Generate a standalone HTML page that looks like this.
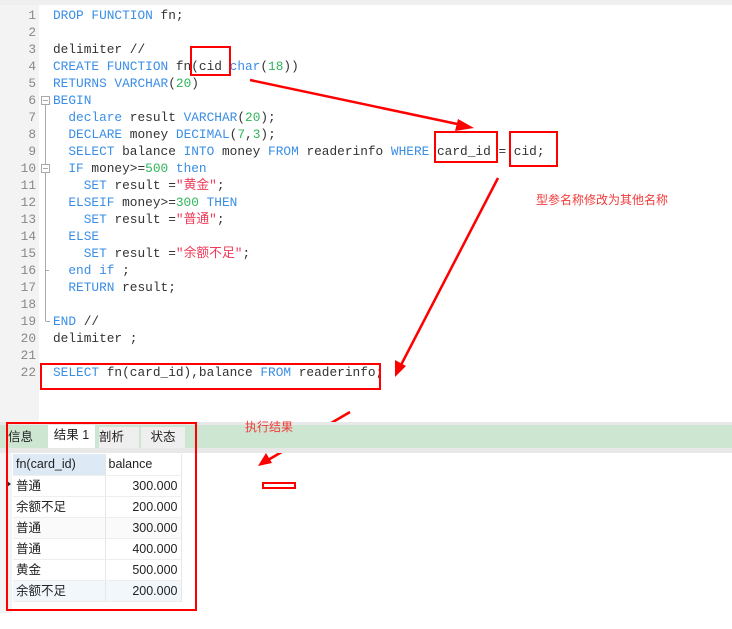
<!DOCTYPE html>
<html><head><meta charset="utf-8"><style>
body{margin:0;width:732px;height:629px;position:relative;background:#fff;overflow:hidden;font-family:"Liberation Sans","Noto Sans CJK SC",sans-serif}
.top{position:absolute;left:0;top:0;width:732px;height:5px;background:#efefef}
.gut{position:absolute;left:0;top:5px;width:39px;height:417px;background:#f3f3f3}
.code{position:absolute;left:0;top:7px;font-family:"Liberation Mono","Noto Sans CJK SC",monospace;font-size:12.8px;color:#333}
.l{position:absolute;height:17px;line-height:17px;white-space:pre}
.n{position:absolute;width:36px;text-align:right;color:#888;left:0}
.t{position:absolute;left:53px}
.k{color:#3a8ee6}.g{color:#2fb55a}.s{color:#f03a5a}
.rb{position:absolute;border:2.5px solid #f00;box-sizing:border-box}
.ann{position:absolute;color:#f03a3a;font-size:12px}
.band{position:absolute;left:0;top:422px;width:732px;height:31px;background:#e8e8e8}
.green{position:absolute;left:0;top:425px;width:732px;height:23px;background:#cde6d2}
.tab{position:absolute;top:427px;height:21px;line-height:21px;font-size:12.5px;color:#222;background:#efefef;text-align:center}
.grid{position:absolute;left:0;top:453px;width:12px;height:160px;background:#f3f3f3}
table{position:absolute;left:13px;top:454px;border-collapse:collapse;font-size:12.5px;color:#222}
td{height:20px;line-height:20px;padding:0 3px;border-right:1px solid #e6e6e6;border-bottom:1px solid #eee;box-sizing:border-box}
tr{height:21px}
td.c1{width:92px}td.c2{width:76px;text-align:right}
tr.h td{background:#dde9f5}tr.h td.c2{background:#fff;text-align:left}
tr.a td{background:#fafafa}tr.b td{background:#f2f7fc}
</style></head><body>
<div class="top"></div><div class="gut"></div>
<svg style="position:absolute;left:0;top:0" width="732" height="629">
<g stroke="#aaa" fill="none" stroke-width="1"><rect x="41.5" y="96.5" width="8" height="8" fill="#fff"/><line x1="43" y1="100.5" x2="48" y2="100.5"/><line x1="45.5" y1="105" x2="45.5" y2="164"/><rect x="41.5" y="164.5" width="8" height="8" fill="#fff"/><line x1="43" y1="168.5" x2="48" y2="168.5"/><line x1="45.5" y1="173" x2="45.5" y2="270"/><line x1="45.5" y1="270.5" x2="49" y2="270.5"/><line x1="45.5" y1="270" x2="45.5" y2="321"/><line x1="45.5" y1="321.5" x2="50" y2="321.5"/></g>
<g stroke="#f00" stroke-width="2.5" fill="#f00">
<line x1="250" y1="80" x2="462" y2="125"/><polygon points="474,128 458,119 455,131" stroke="none"/>
<line x1="498" y1="178" x2="401" y2="365"/><polygon points="395,377 395,360 406,366" stroke="none"/>
<line x1="350" y1="412" x2="268" y2="460"/><polygon points="258,466 266,453 272,463" stroke="none"/>
</g></svg>
<div class="code">
<div class="l" style="top:0"><span class="n">1</span><span class="t"><span class="k">DROP FUNCTION</span> fn;</span></div>
<div class="l" style="top:17px"><span class="n">2</span></div>
<div class="l" style="top:34px"><span class="n">3</span><span class="t">delimiter //</span></div>
<div class="l" style="top:51px"><span class="n">4</span><span class="t"><span class="k">CREATE FUNCTION</span> fn(cid <span class="k">char</span>(<span class="g">18</span>))</span></div>
<div class="l" style="top:68px"><span class="n">5</span><span class="t"><span class="k">RETURNS VARCHAR</span>(<span class="g">20</span>)</span></div>
<div class="l" style="top:85px"><span class="n">6</span><span class="t"><span class="k">BEGIN</span></span></div>
<div class="l" style="top:102px"><span class="n">7</span><span class="t">  <span class="k">declare</span> result <span class="k">VARCHAR</span>(<span class="g">20</span>);</span></div>
<div class="l" style="top:119px"><span class="n">8</span><span class="t">  <span class="k">DECLARE</span> money <span class="k">DECIMAL</span>(<span class="g">7</span>,<span class="g">3</span>);</span></div>
<div class="l" style="top:136px"><span class="n">9</span><span class="t">  <span class="k">SELECT</span> balance <span class="k">INTO</span> money <span class="k">FROM</span> readerinfo <span class="k">WHERE</span> card_id = cid;</span></div>
<div class="l" style="top:153px"><span class="n">10</span><span class="t">  <span class="k">IF</span> money&gt;=<span class="g">500</span> <span class="k">then</span></span></div>
<div class="l" style="top:170px"><span class="n">11</span><span class="t">    <span class="k">SET</span> result =<span class="s">"黄金"</span>;</span></div>
<div class="l" style="top:187px"><span class="n">12</span><span class="t">  <span class="k">ELSEIF</span> money&gt;=<span class="g">300</span> <span class="k">THEN</span></span></div>
<div class="l" style="top:204px"><span class="n">13</span><span class="t">    <span class="k">SET</span> result =<span class="s">"普通"</span>;</span></div>
<div class="l" style="top:221px"><span class="n">14</span><span class="t">  <span class="k">ELSE</span></span></div>
<div class="l" style="top:238px"><span class="n">15</span><span class="t">    <span class="k">SET</span> result =<span class="s">"余额不足"</span>;</span></div>
<div class="l" style="top:255px"><span class="n">16</span><span class="t">  <span class="k">end if</span> ;</span></div>
<div class="l" style="top:272px"><span class="n">17</span><span class="t">  <span class="k">RETURN</span> result;</span></div>
<div class="l" style="top:289px"><span class="n">18</span></div>
<div class="l" style="top:306px"><span class="n">19</span><span class="t"><span class="k">END</span> //</span></div>
<div class="l" style="top:323px"><span class="n">20</span><span class="t">delimiter ;</span></div>
<div class="l" style="top:340px"><span class="n">21</span></div>
<div class="l" style="top:357px"><span class="n">22</span><span class="t"><span class="k">SELECT</span> fn(card_id),balance <span class="k">FROM</span> readerinfo;</span></div>
</div>
<div class="rb" style="left:190px;top:46px;width:41px;height:30px"></div>
<div class="rb" style="left:434px;top:131px;width:64px;height:32px"></div>
<div class="rb" style="left:509px;top:131px;width:49px;height:36px"></div>
<div class="rb" style="left:40px;top:363px;width:341px;height:27px"></div>
<div class="ann" style="left:536px;top:191px">型参名称修改为其他名称</div>
<div class="band"></div><div class="green"></div>
<div class="ann" style="left:245px;top:418px">执行结果</div>
<div class="tab" style="left:8px;width:30px;background:transparent;text-align:left">信息</div>
<div class="tab" style="left:48px;width:47px;background:#fff;top:425px;height:23px">结果 1</div>
<div class="tab" style="left:99px;width:40px;text-align:left">剖析</div>
<div class="tab" style="left:141px;width:44px">状态</div>
<div class="grid"></div>
<table>
<tr class="h"><td class="c1">fn(card_id)</td><td class="c2">balance</td></tr>
<tr><td class="c1">普通</td><td class="c2">300.000</td></tr>
<tr><td class="c1">余额不足</td><td class="c2">200.000</td></tr>
<tr class="a"><td class="c1">普通</td><td class="c2">300.000</td></tr>
<tr><td class="c1">普通</td><td class="c2">400.000</td></tr>
<tr><td class="c1">黄金</td><td class="c2">500.000</td></tr>
<tr class="b"><td class="c1">余额不足</td><td class="c2">200.000</td></tr>
</table>
<div style="position:absolute;left:7px;top:481px;width:0;height:0;border-left:4px solid #222;border-top:3px solid transparent;border-bottom:3px solid transparent"></div>
<div class="rb" style="left:6px;top:422px;width:191px;height:189px"></div>
<div class="rb" style="left:262px;top:482px;width:34px;height:7px;border-width:2px"></div>
</body></html>
